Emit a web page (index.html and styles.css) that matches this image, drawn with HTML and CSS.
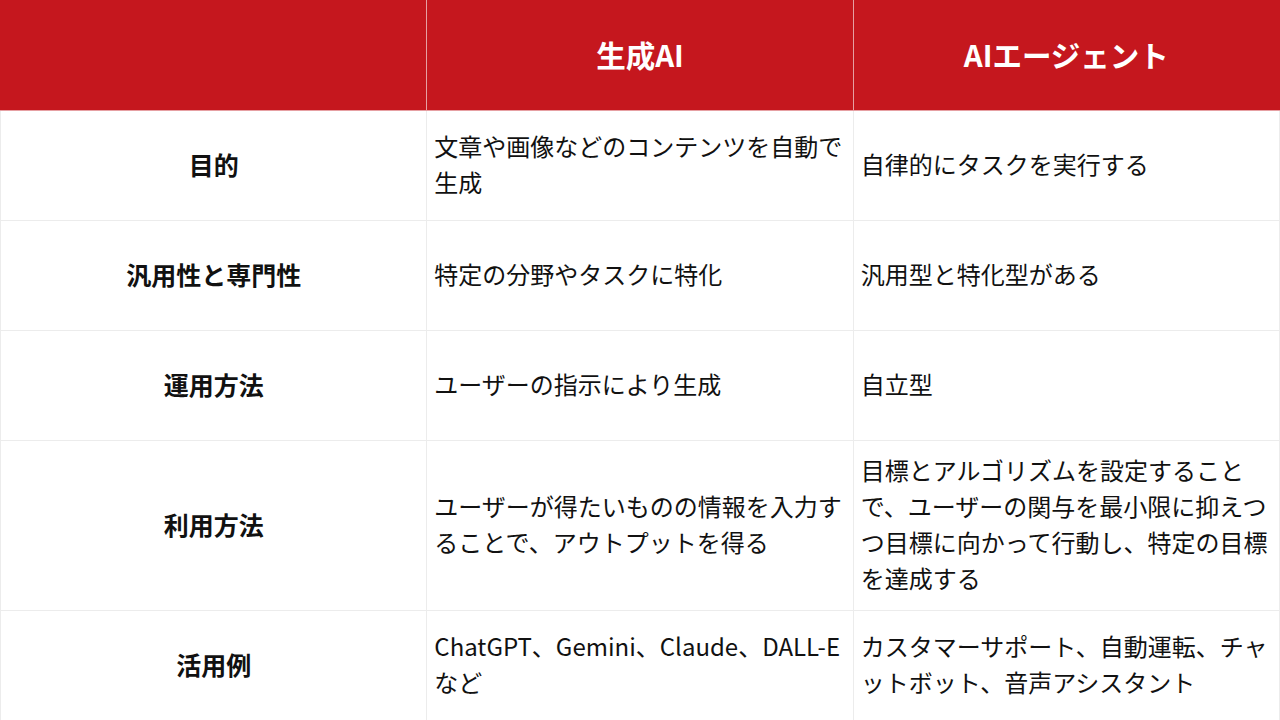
FILE: index.html
```html
<!DOCTYPE html>
<html lang="ja">
<head>
<meta charset="utf-8">
<link rel="stylesheet" href="styles.css">
</head>
<body>
<table class="cmp">
  <colgroup><col class="c"><col class="c"><col class="c"></colgroup>
  <thead>
    <tr class="head">
      <th></th>
      <th>生成AI</th>
      <th>AIエージェント</th>
    </tr>
  </thead>
  <tbody>
    <tr class="row">
      <th>目的</th>
      <td>文章や画像などのコンテンツを自動で生成</td>
      <td>自律的にタスクを実行する</td>
    </tr>
    <tr class="row">
      <th>汎用性と専門性</th>
      <td>特定の分野やタスクに特化</td>
      <td>汎用型と特化型がある</td>
    </tr>
    <tr class="row">
      <th>運用方法</th>
      <td>ユーザーの指示により生成</td>
      <td>自立型</td>
    </tr>
    <tr class="row tall">
      <th>利用方法</th>
      <td>ユーザーが得たいものの情報を入力することで、アウトプットを得る</td>
      <td>目標とアルゴリズムを設定することで、ユーザーの関与を最小限に抑えつつ目標に向かって行動し、特定の目標を達成する</td>
    </tr>
    <tr class="row">
      <th>活用例</th>
      <td>ChatGPT、Gemini、Claude、DALL-Eなど</td>
      <td>カスタマーサポート、自動運転、チャットボット、音声アシスタント</td>
    </tr>
  </tbody>
</table>
</body>
</html>
```
FILE: styles.css
```css
html, body {
  margin: 0;
  padding: 0;
  background: #ffffff;
}
body {
  font-family: "Noto Sans CJK JP", "Noto Sans", sans-serif;
  color: #111;
}
.cmp {
  width: 1280px;
  border-collapse: collapse;
  table-layout: fixed;
}
.c { width: 33.333%; }
.cmp th, .cmp td {
  border: 1px solid #ececec;
  padding: 0 7px 4px;
  vertical-align: middle;
}
.head th {
  height: 105px;
  background: #c5171e;
  color: #fff;
  font-size: 29.5px;
  font-weight: 700;
  text-align: center;
  border-color: #e6a0a3;
  border-top-color: #c5171e;
}
.head th:first-child { border-left-color: #c5171e; }
.head th:last-child { border-right-color: #c5171e; }
.row { height: 110px; }
.row.tall { height: 170px; }
.row th {
  font-size: 25px;
  font-weight: 700;
  text-align: center;
}
.row td {
  font-size: 24px;
  line-height: 36px;
  text-align: left;
  font-weight: 400;
}
```
